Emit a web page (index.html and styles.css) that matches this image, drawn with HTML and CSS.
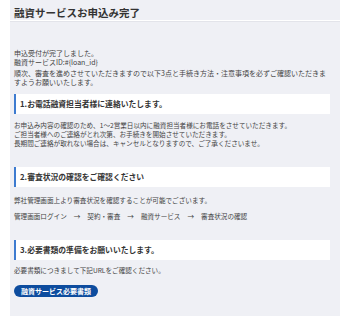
FILE: index.html
```html
<!DOCTYPE html>
<html lang="ja">
<head>
    <meta charset="UTF-8">
    <meta name="viewport" content="width=device-width, initial-scale=1.0">
    <title>融資サービスお申込み完了</title>
    <link rel="stylesheet" href="styles.css">
</head>
<body>
    <div class="panel">
        <div class="page-header">
            <h1 class="page-title">融資サービスお申込み完了</h1>
        </div>

        <div class="intro">
            <p class="text">申込受付が完了しました。<br>融資サービスID:#{loan_id}</p>
            <p class="text text-gap">順次、審査を進めさせていただきますので以下3点と手続き方法・注意事項を必ずご確認いただきますようお願いいたします。</p>
        </div>

        <div class="section first">
            <div class="section-title">1.お電話融資担当者様に連絡いたします。</div>
            <p class="section-text">お申込み内容の確認のため、1～2営業日以内に融資担当者様にお電話をさせていただきます。<br>ご担当者様へのご連絡がとれ次第、お手続きを開始させていただきます。<br>長期間ご連絡が取れない場合は、キャンセルとなりますので、ご了承くださいませ。</p>
        </div>

        <div class="section">
            <div class="section-title">2.審査状況の確認をご確認ください</div>
            <p class="section-text wide">弊社管理画面上より審査状況を確認することが可能でございます。</p>
            <div class="flow">
                <span>管理画面ログイン</span>
                <span class="arrow">→</span>
                <span>契約・審査</span>
                <span class="arrow">→</span>
                <span>融資サービス</span>
                <span class="arrow">→</span>
                <span>審査状況の確認</span>
            </div>
        </div>

        <div class="section">
            <div class="section-title">3.必要書類の準備をお願いいたします。</div>
            <p class="section-text">必要書類につきまして下記URLをご確認ください。</p>
            <a class="doc-button" href="#">融資サービス必要書類</a>
        </div>
    </div>
</body>
</html>
```

FILE: styles.css
```css
body {
    margin: 0;
    background: #ffffff;
    font-family: "Noto Sans CJK JP", "Noto Sans", sans-serif;
    color: #444;
}

.panel {
    margin-left: 10px;
    min-height: 100vh;
    background: #eff0f5;
}

.page-header {
    border-bottom: 1px solid #ffffff;
    box-shadow: 0 1px 0 #e3e4ea;
    padding: 6px 4px 0;
    height: 14px;
}

.page-title {
    margin: 0;
    font-size: 10.5px;
    line-height: 14px;
    font-weight: 700;
    color: #333;
}

.intro {
    padding: 28px 10px 0 4px;
}

.text {
    margin: 0;
    font-size: 7px;
    line-height: 9px;
}

.text-gap {
    margin-top: 2px;
}

.section {
    padding: 0 10px 0 4px;
    margin-top: 19px;
}

.section.first {
    margin-top: 7px;
}

.section-title {
    height: 20px;
    line-height: 20px;
    background: #ffffff;
    border-left: 2px solid #3d7bd0;
    padding-left: 4px;
    font-size: 7.8px;
    font-weight: 700;
    color: #333;
}

.section-text {
    margin: 6.5px 0 0;
    font-size: 6.6px;
    line-height: 9px;
}

.section-text.wide {
    margin-top: 9px;
}

.flow {
    display: flex;
    gap: 7px;
    margin-top: 7px;
    font-size: 6.6px;
    line-height: 9px;
}

.doc-button {
    display: inline-block;
    margin-top: 9px;
    height: 12px;
    line-height: 12px;
    padding: 0 7px;
    border-radius: 6px;
    background: #0d4c9e;
    color: #ffffff;
    font-size: 7px;
    font-weight: 700;
    text-decoration: none;
}
```
